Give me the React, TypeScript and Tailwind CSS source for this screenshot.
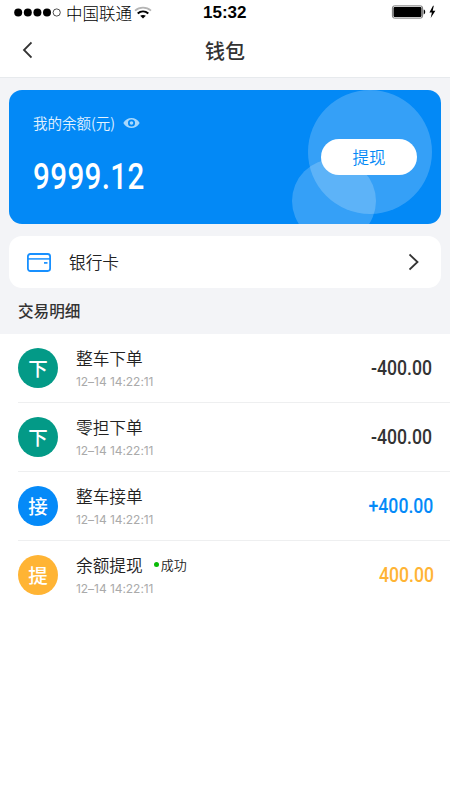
import type { ReactNode } from 'react';

type Transaction = {
  badge: string;
  badgeClass: string;
  title: string;
  time: string;
  amount: string;
  amountClass: string;
  status?: string;
};

const transactions: Transaction[] = [
  {
    badge: '下',
    badgeClass: 'bg-[#039a87]',
    title: '整车下单',
    time: '12–14 14:22:11',
    amount: '-400.00',
    amountClass: 'text-[#333] mr-[18px]',
  },
  {
    badge: '下',
    badgeClass: 'bg-[#039a87]',
    title: '零担下单',
    time: '12–14 14:22:11',
    amount: '-400.00',
    amountClass: 'text-[#333] mr-[18px]',
  },
  {
    badge: '接',
    badgeClass: 'bg-[#058af8]',
    title: '整车接单',
    time: '12–14 14:22:11',
    amount: '+400.00',
    amountClass: 'text-[#058af8] mr-[17px]',
  },
  {
    badge: '提',
    badgeClass: 'bg-[#ffb434]',
    title: '余额提现',
    time: '12–14 14:22:11',
    amount: '400.00',
    amountClass: 'text-[#ffb434] mr-4',
    status: '成功',
  },
];

function Chevron({ className, children }: { className: string; children: ReactNode }) {
  return (
    <svg
      className={className}
      width="10"
      height="18"
      viewBox="0 0 10 18"
      fill="none"
      stroke="#333"
      strokeWidth="1.8"
    >
      {children}
    </svg>
  );
}

function StatusBar() {
  return (
    <div className="relative flex h-6 items-center pl-[14px] pr-[14px] text-black">
      {/* Signal dots */}
      <svg width="47" height="9" viewBox="0 0 47 9">
        <circle cx="4.2" cy="4.5" r="4" />
        <circle cx="13.8" cy="4.5" r="4" />
        <circle cx="23.4" cy="4.5" r="4" />
        <circle cx="33" cy="4.5" r="4" />
        <circle cx="42.7" cy="4.5" r="3.6" fill="none" stroke="#222" strokeWidth="0.8" />
      </svg>
      <span className="mt-[2px] ml-[5px] text-[16.5px] leading-6 font-light">中国联通</span>
      <svg className="ml-[2px]" width="18" height="13" viewBox="0 0 18 13" fill="none">
        <path d="M1 4.6C5.6 0.6 12.4 0.6 17 4.6" stroke="#b5b5b5" strokeWidth="1.8" />
        <path d="M3.7 7.6C6.8 4.9 11.2 4.9 14.3 7.6" stroke="#000" strokeWidth="2" />
        <path d="M9 12.6L6.2 9.8C7.8 8.6 10.2 8.6 11.8 9.8Z" fill="#000" />
      </svg>
      <span className="absolute top-0 left-[203px] font-['Liberation_Sans',sans-serif] text-[17px] leading-[26px] font-bold">
        15:32
      </span>
      <svg className="ml-auto" width="45" height="14" viewBox="0 0 45 14">
        <rect x="1.4" y="0.9" width="30.2" height="12.2" rx="2" fill="none" stroke="#777" />
        <rect x="2.5" y="2" width="28" height="10" rx="1" />
        <path d="M32.7 4.6C34.7 5 34.7 9 32.7 9.4Z" />
        <path d="M42 0.8L38.4 7.4H40.9L39.7 13L44.4 5.8H41.7L42.8 0.8Z" />
      </svg>
    </div>
  );
}

function BalanceCard() {
  return (
    <section className="relative h-[134px] overflow-hidden rounded-[13px] bg-[#0389f6] pl-6 text-white">
      {/* Decorative circles */}
      <div className="absolute top-0 left-[299px] size-[124px] rounded-full bg-white/20" />
      <div className="absolute top-[69px] left-[283px] size-[84px] rounded-full bg-white/20" />

      <div className="flex items-center pt-[21px]">
        <span className="text-[14.5px] leading-6 font-[350] text-white/90">我的余额(元)</span>
        <svg className="ml-[8px]" width="17" height="12" viewBox="0 0 17 12">
          <path
            d="M0.3 6C2.3 2.7 5.2 1 8.5 1S14.7 2.7 16.7 6C14.7 9.3 11.8 11 8.5 11S2.3 9.3 0.3 6Z"
            fill="#a8d8fc"
          />
          <circle cx="8.5" cy="6" r="2.7" fill="none" stroke="#0389f6" strokeWidth="1.8" />
        </svg>
      </div>
      <div className="mt-[21px] w-fit origin-left scale-x-[.82] font-[Roboto,sans-serif] text-[36px] leading-[42px] font-medium tracking-[0.5px]">
        9999.12
      </div>
      <button className="absolute top-[49px] left-[312px] h-9 w-24 rounded-full bg-white text-[16.5px] font-[350] text-[#0389f6]">
        提现
      </button>
    </section>
  );
}

function TransactionRow({ item }: { item: Transaction }) {
  return (
    <li className="ml-[18px] flex h-[69px] items-center border-b border-[#eeeff0] last:border-transparent">
      <div
        className={`flex size-10 items-center justify-center rounded-full pb-px text-[19.5px] font-medium text-white ${item.badgeClass}`}
      >
        {item.badge}
      </div>
      <div className="ml-[18px] pt-[2px]">
        <div className="flex items-center">
          <span className="text-[16.7px] leading-6 font-[350] text-[#222]">{item.title}</span>
          {item.status && (
            <>
              <i className="ml-[11px] size-[5px] rounded-full bg-[#09bb07]" />
              <span className="ml-[2px] text-[13px] leading-6 font-[350] text-[#222]">{item.status}</span>
            </>
          )}
        </div>
        <div className="mt-px font-[Inter,sans-serif] text-[12px] leading-[22px] tracking-[-0.05px] text-[#aaa]">
          {item.time}
        </div>
      </div>
      <span
        className={`ml-auto origin-right scale-x-[.86] font-[Roboto,sans-serif] text-[20.5px] font-medium ${item.amountClass}`}
      >
        {item.amount}
      </span>
    </li>
  );
}

export default function App() {
  return (
    <div className="min-h-screen w-[450px] overflow-hidden bg-white font-['Noto_Sans_CJK_SC',sans-serif]">
      <StatusBar />
      <header className="relative flex h-[53px] items-center justify-center">
        <Chevron className="absolute top-[17px] left-[22px]">
          <path d="M9.5 1.5L2 9L9.5 16.5" />
        </Chevron>
        <h1 className="text-[20px] leading-[30px] font-medium text-[#333]">钱包</h1>
      </header>

      <main>
        <div className="h-[257px] border-t border-[#e7eaed] bg-[#f3f4f7] px-[9px] pt-3">
          <BalanceCard />
          <section className="mt-3 flex h-[52px] items-center rounded-[13px] bg-white pl-[18px]">
            <svg width="24" height="19" viewBox="0 0 24 19" fill="none" stroke="#1890ff">
              <rect x="0.9" y="1" width="22.2" height="17" rx="2.4" strokeWidth="1.8" />
              <path d="M1 5.9H23" strokeWidth="1.5" />
              <path d="M17 9.9H20.5" strokeWidth="1.7" />
            </svg>
            <span className="ml-[18px] pt-px text-[16.7px] font-[350] text-[#222]">银行卡</span>
            <Chevron className="mr-[22px] ml-auto">
              <path d="M0.5 1.5L8.5 9L0.5 16.5" />
            </Chevron>
          </section>
          <h2 className="mt-[10px] ml-[9px] text-[15.6px] leading-6 font-medium text-[#333]">交易明细</h2>
        </div>

        <ul>
          {transactions.map((item) => (
            <TransactionRow key={item.title} item={item} />
          ))}
        </ul>
      </main>
    </div>
  );
}
